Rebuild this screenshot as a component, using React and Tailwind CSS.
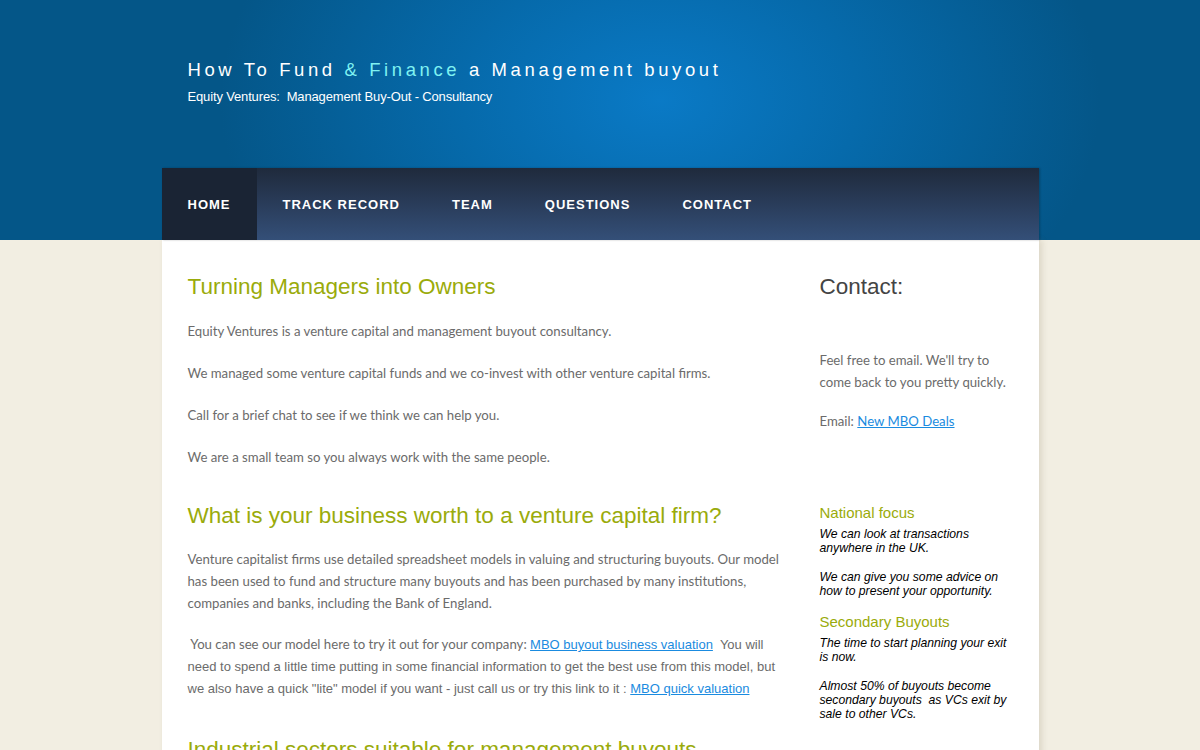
import React from 'react'

const nav = ['HOME', 'TRACK RECORD', 'TEAM', 'QUESTIONS', 'CONTACT']

function Para({ children, mb = 'mb-[20px]', className = '' }) {
  return <p className={`text-[13.2px] leading-[22px] text-[#6b6b6b] ${mb} ${className}`}>{children}</p>
}

function Heading({ children, className = 'mb-[20px]' }) {
  return (
    <h2 className={`font-['Liberation_Sans',Arial,sans-serif] text-[22.5px] leading-[28px] text-[#9aab0b] ${className}`}>
      {children}
    </h2>
  )
}

function Side({ title, children }) {
  return (
    <div className="mb-[14px]">
      <h3 className="font-['Liberation_Sans',Arial,sans-serif] text-[15px] leading-[20px] text-[#9aab0b] mb-[4px]">{title}</h3>
      <div className="font-['Liberation_Sans',Arial,sans-serif] italic text-[12.2px] leading-[14px] text-black">{children}</div>
    </div>
  )
}

export default function App() {
  return (
    <div className="min-h-[750px] bg-[#f2eee2] font-['Lato','DejaVu_Sans',sans-serif] overflow-hidden">
      <header className="h-[240px] bg-[radial-gradient(ellipse_440px_300px_at_660px_100px,#0a7ac6_0%,#066aab_45%,#045688_100%)]">
        <div className="w-[877px] mx-auto h-full flex flex-col">
          <div className="h-[168px] pl-[26px] pt-[58px] font-['Liberation_Sans',Arial,sans-serif]">
            <h1 className="text-[18.5px] leading-[24px] tracking-[3.6px] text-white">
              How To Fund <span className="text-[#7ff2f2]">&amp; Finance</span> a Management buyout
            </h1>
            <p className="text-[13px] leading-[16px] mt-[7px] tracking-[-0.15px] text-white">
              Equity Ventures:&nbsp; Management Buy-Out - Consultancy
            </p>
          </div>
          <nav className="h-[72px] flex bg-[linear-gradient(#1f2a3c,#344f78)] font-['Liberation_Sans',Arial,sans-serif] shadow-[1px_0_2px_rgba(0,0,0,0.25)]">
            {nav.map((n, i) => (
              <a
                key={n}
                className={`h-full flex items-center pt-[2px] px-[26px] text-[13px] font-bold tracking-[1px] text-white ${
                  i === 0 ? 'bg-[#1a2434]' : ''
                }`}
              >
                {n}
              </a>
            ))}
          </nav>
        </div>
      </header>

      <main className="w-[877px] mx-auto bg-white shadow-[3px_0_6px_rgba(120,110,80,0.18)] flex pl-[26px] pt-[33px] min-h-[510px]">
        <div className="w-[600px] mr-[32px]">
          <Heading className="mb-[19px]">Turning Managers into Owners</Heading>
          <Para>Equity Ventures is a venture capital and management buyout consultancy.</Para>
          <Para>We managed some venture capital funds and we co-invest with other venture capital firms.</Para>
          <Para>Call for a brief chat to see if we think we can help you.</Para>
          <Para mb="mb-[34px]">We are a small team so you always work with the same people.</Para>

          <Heading className="mb-[18px]">What is your business worth to a venture capital firm?</Heading>
          <Para mb="mb-[19px]">
            Venture capitalist firms use detailed spreadsheet models in valuing and structuring buyouts. Our model has been used to fund and structure many buyouts and has been purchased by many institutions, companies and banks, including the Bank of England.
          </Para>
          <Para mb="mb-[37px]">
            &nbsp;You can see our model here to try it out for your company:{' '}
            <span className="font-['Liberation_Sans',Arial,sans-serif] text-[13px] leading-[14px]">
              <a className="text-[#1a8be0] underline">MBO buyout business valuation</a>
              &nbsp; You will need to spend a little time putting in some financial information to get the best use from this model, but we also have a quick "lite" model if you want - just call us or try this link to it :{' '}
              <a className="text-[#1a8be0] underline">MBO quick valuation</a>
            </span>
          </Para>

          <Heading>Industrial sectors suitable for management buyouts</Heading>
        </div>

        <aside className="w-[193px]">
          <h2 className="font-['Liberation_Sans',Arial,sans-serif] text-[22.5px] leading-[28px] text-[#444]">Contact:</h2>
          <Para mb="mb-[17px]" className="mt-[48px]">Feel free to email. We'll try to come back to you pretty quickly.</Para>
          <Para mb="mb-0">
            Email: <a className="text-[#1a8be0] underline">New MBO Deals</a>
          </Para>
          <div className="mt-[71px]">
            <Side title="National focus">
              <p>We can look at transactions anywhere in the UK.</p>
              <p className="mt-[15px]">We can give you some advice on how to present your opportunity.</p>
            </Side>
            <Side title="Secondary Buyouts">
              <p>The time to start planning your exit is now.</p>
              <p className="mt-[15px]">Almost 50% of buyouts become secondary buyouts&nbsp; as VCs exit by sale to other VCs.</p>
            </Side>
          </div>
        </aside>
      </main>
    </div>
  )
}
